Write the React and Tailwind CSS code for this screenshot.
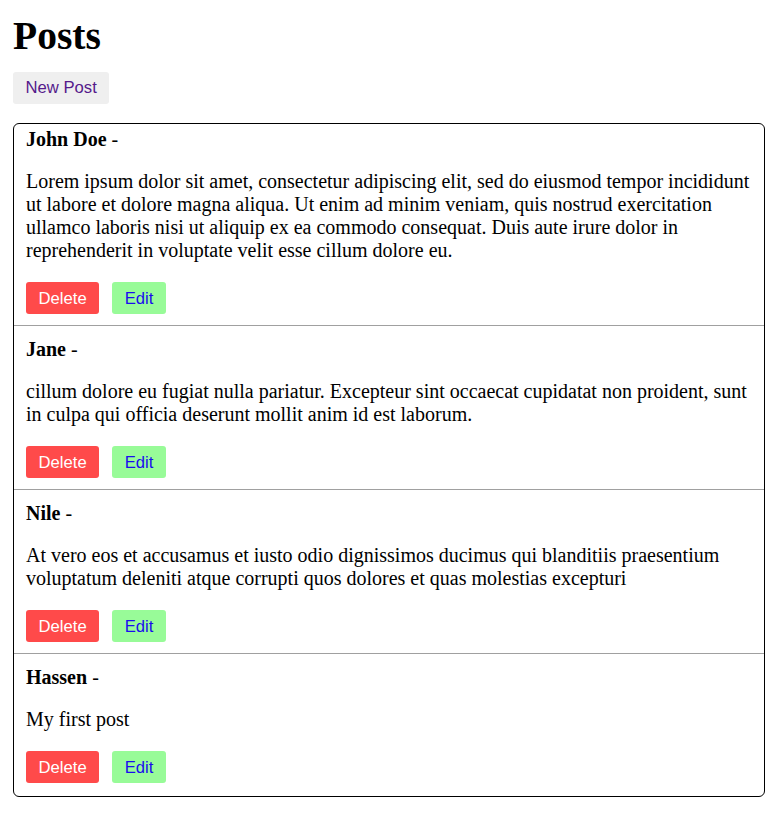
const posts = [
  {
    id: 1,
    author: "John Doe",
    body: "Lorem ipsum dolor sit amet, consectetur adipiscing elit, sed do eiusmod tempor incididunt ut labore et dolore magna aliqua. Ut enim ad minim veniam, quis nostrud exercitation ullamco laboris nisi ut aliquip ex ea commodo consequat. Duis aute irure dolor in reprehenderit in voluptate velit esse cillum dolore eu.",
  },
  {
    id: 2,
    author: "Jane",
    body: "cillum dolore eu fugiat nulla pariatur. Excepteur sint occaecat cupidatat non proident, sunt in culpa qui officia deserunt mollit anim id est laborum.",
  },
  {
    id: 3,
    author: "Nile",
    body: "At vero eos et accusamus et iusto odio dignissimos ducimus qui blanditiis praesentium voluptatum deleniti atque corrupti quos dolores et quas molestias excepturi",
  },
  { id: 4, author: "Hassen", body: "My first post" },
];

function Post({ post, first, last }) {
  return (
    <div
      className={`px-[12px] ${first ? "pt-[4px]" : "pt-[12px] border-t border-[#a0a0a0]"} ${last ? "pb-[13px]" : "pb-[11px]"}`}
    >
      <div className="leading-[23px] font-normal">
        <span className="font-bold">{post.author}</span> -
      </div>
      <p className="mt-[19px] leading-[23px]">{post.body}</p>
      <div className="mt-[20px] flex gap-[13px]">
        <button className="h-[32px] px-[12.5px] rounded-[3px] bg-[#ff4a4a] text-white text-[16.67px] font-['Liberation_Sans',Arial,sans-serif]">
          Delete
        </button>
        <button className="h-[32px] px-[12.5px] rounded-[3px] bg-[#98fb98] text-[#1a0dee] text-[16.67px] font-['Liberation_Sans',Arial,sans-serif]">
          Edit
        </button>
      </div>
    </div>
  );
}

export default function App() {
  return (
    <div className="bg-white min-h-screen px-[13px] pt-[14px] pb-[20px] text-black text-[20px] font-['Liberation_Serif','Times_New_Roman',serif]">
      <h1 className="text-[39.5px] font-bold leading-[44px]">Posts</h1>
      <button className="mt-[14px] h-[32px] px-[12.5px] pb-[2px] rounded-[3px] bg-[#efefef] text-[#551a8b] text-[16.67px] font-['Liberation_Sans',Arial,sans-serif]">
        New Post
      </button>
      <div className="mt-[19px] w-[752px] border border-black rounded-[6px]">
        {posts.map((p, i) => (
          <Post key={p.id} post={p} first={i === 0} last={i === posts.length - 1} />
        ))}
      </div>
    </div>
  );
}
